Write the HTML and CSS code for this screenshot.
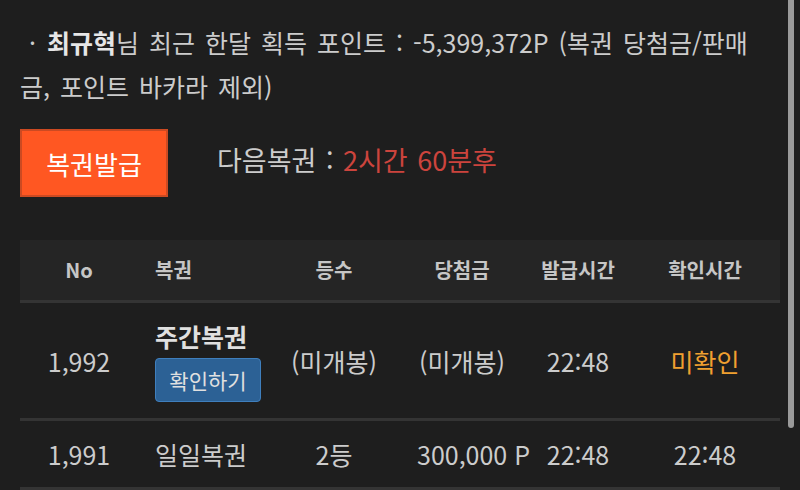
FILE: index.html
```html
<!DOCTYPE html>
<html lang="ko">
<head>
  <meta charset="UTF-8" />
  <meta name="viewport" content="width=device-width, initial-scale=1.0"/>
  <title>복권</title>
  <link rel="stylesheet" href="styles.css">
</head>
<body>

  <div class="page">
    <!-- 포인트 요약 -->
    <p class="summary"><span class="dot">·</span><b>최규혁</b>님 최근 한달 획득 포인트 : -5,399,372P (복권 당첨금/판매금, 포인트 바카라 제외)</p>

    <!-- 발급 -->
    <div class="issue">
      <button class="issue-btn">복권발급</button>
      <span class="next">다음복권 : <em>2시간 60분후</em></span>
    </div>

    <!-- 복권 목록 -->
    <div class="table">
      <div class="row head">
        <div class="cell">No</div>
        <div class="cell name">복권</div>
        <div class="cell">등수</div>
        <div class="cell prize">당첨금</div>
        <div class="cell">발급시간</div>
        <div class="cell">확인시간</div>
      </div>
      <div class="row">
        <div class="cell">1,992</div>
        <div class="cell name">
          <div class="title">주간복권</div>
          <button class="check-btn">확인하기</button>
        </div>
        <div class="cell">(미개봉)</div>
        <div class="cell prize">(미개봉)</div>
        <div class="cell">22:48</div>
        <div class="cell unread">미확인</div>
      </div>
      <div class="row">
        <div class="cell">1,991</div>
        <div class="cell name">일일복권</div>
        <div class="cell">2등</div>
        <div class="cell prize">300,000 P</div>
        <div class="cell">22:48</div>
        <div class="cell">22:48</div>
      </div>
    </div>
  </div>

  <div class="scrollbar"></div>

</body>
</html>
```

FILE: styles.css
```css
:root {
  --bg: #1e1e1e;
  --head: #252525;
  --line: #343434;
  --text: #cccccc;
  --orange: #ff5722;
  --red: #cc443d;
  --blue: #2c6195;
  --gold: #f0a030;
}

* {
  margin: 0;
  padding: 0;
  box-sizing: border-box;
  font-family: 'Noto Sans CJK KR', 'Noto Sans', sans-serif;
}

body {
  background: var(--bg);
  color: var(--text);
  overflow: hidden;
}

.page {
  padding: 20px 20px 0;
}

.summary {
  font-size: 25px;
  line-height: 44px;
  word-spacing: 3px;
  margin-right: 15px;
}

.summary .dot {
  display: inline-block;
  width: 25px;
  text-align: center;
  margin-right: 2px;
}

.summary b {
  color: #e6e6e6;
}

.issue {
  display: flex;
  align-items: center;
  gap: 49px;
  margin-top: 21px;
}

.issue-btn {
  width: 148px;
  height: 68px;
  background: var(--orange);
  border: 2px solid #cc4a22;
  color: #fff;
  font-size: 26px;
}

.next {
  font-size: 27px;
  word-spacing: 2px;
  margin-top: -8px;
}

.next em {
  font-style: normal;
  color: var(--red);
}

.table {
  margin-top: 43px;
}

.row {
  display: grid;
  grid-template-columns: 118px 132px 128px 128px 104px 150px;
  align-items: center;
  border-bottom: 3px solid var(--line);
  font-size: 25px;
  padding: 16px 0;
}

.row.head {
  background: var(--head);
  color: #c6c6c6;
  font-size: 20px;
  font-weight: 700;
  height: 63px;
  padding: 0;
}

.cell {
  text-align: center;
  white-space: nowrap;
  line-height: 34px;
}

.cell.name {
  text-align: left;
  padding-left: 17px;
}

.cell.prize {
  padding: 0 19px;
}

.title {
  font-weight: 700;
  color: #e0e0e0;
}

.check-btn {
  margin-top: 5px;
  width: 106px;
  height: 44px;
  background: var(--blue);
  border: 1px solid #3f7fbd;
  border-radius: 4px;
  color: #e0e0e0;
  font-size: 21px;
}

.unread {
  color: var(--gold);
}

.scrollbar {
  position: absolute;
  top: 0;
  right: 6px;
  width: 6px;
  height: 428px;
  background: #9a9a9a;
  border-radius: 0 0 3px 3px;
}
```
